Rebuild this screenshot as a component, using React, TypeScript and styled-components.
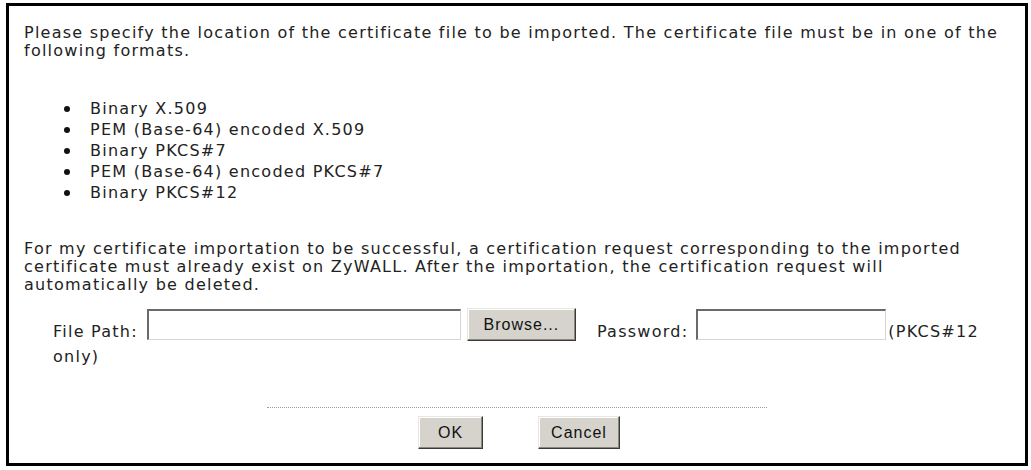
import React from "react";
import styled, { createGlobalStyle } from "styled-components";

const Global = createGlobalStyle`
  html, body { margin: 0; padding: 0; background: #ffffff; }
  body { font-family: "DejaVu Sans", Verdana, sans-serif; }
`;

const Panel = styled.div`
  box-sizing: border-box;
  margin: 3px 0 0 6px;
  width: 1022px;
  height: 463px;
  border: 3px solid #000;
  padding: 18px 15px 14px 15px;
  display: flex;
  flex-direction: column;
  color: #222;
  font-size: 16px;
  line-height: 18px;
  letter-spacing: 1.25px;
`;

const Para = styled.p<{ $top?: number }>`
  margin: ${(p) => p.$top ?? 0}px 0 0 0;
  white-space: nowrap;
`;

const List = styled.ul`
  list-style: none;
  margin: 38px 0 0 0;
  padding: 0 0 0 40px;
`;

const Item = styled.li`
  display: flex;
  align-items: center;
  height: 21px;
  line-height: 21px;
`;

const Dot = styled.span`
  width: 6px;
  height: 6px;
  border-radius: 50%;
  background: #111;
  margin: 0 20px 0 0;
  flex: none;
`;

const FormLine = styled.div`
  display: flex;
  align-items: center;
  margin-top: 14px;
  padding-left: 29px;
  height: 33px;
  white-space: nowrap;
`;

const Label = styled.span<{ $before?: number; $after?: number }>`
  align-self: flex-end;
  margin-left: ${(p) => p.$before ?? 0}px;
  margin-right: ${(p) => p.$after ?? 0}px;
`;

const TextInput = styled.input<{ $w: number }>`
  box-sizing: border-box;
  width: ${(p) => p.$w}px;
  height: 31px;
  margin: 0;
  padding: 0 3px;
  background: #fff;
  border-style: solid;
  border-width: 2px 1px 1px 2px;
  border-color: #6a6a6a #d6d6d6 #d6d6d6 #6a6a6a;
  outline: none;
`;

const ClassicButton = styled.button<{ $w: number; $before?: number }>`
  box-sizing: border-box;
  width: ${(p) => p.$w}px;
  height: 33px;
  margin-left: ${(p) => p.$before ?? 0}px;
  padding: 0;
  background: #d6d3cd;
  border: 1px solid;
  border-color: #e8e6e2 #3a3a3a #3a3a3a #e8e6e2;
  box-shadow: inset -1px -1px 0 #8a8780, inset 1px 1px 0 #ffffff;
  font-family: "Liberation Sans", Arial, sans-serif;
  font-size: 16px;
  letter-spacing: 1px;
  color: #111;
  cursor: default;
`;

const WrapLine = styled.div`
  padding-left: 29px;
  margin-top: 7px;
`;

const Footer = styled.div`
  margin-top: auto;
  display: flex;
  flex-direction: column;
  align-items: center;
`;

const Divider = styled.div`
  width: 500px;
  border-top: 1px dotted #9a9a9a;
  margin-bottom: 8px;
`;

const ButtonRow = styled.div`
  display: flex;
  gap: 55px;
  padding-left: 4px;
`;

const formats = [
  "Binary X.509",
  "PEM (Base-64) encoded X.509",
  "Binary PKCS#7",
  "PEM (Base-64) encoded PKCS#7",
  "Binary PKCS#12",
];

export default function App() {
  return (
    <>
      <Global />
      <Panel>
        <Para>
          Please specify the location of the certificate file to be imported. The certificate file must be in one of the
          <br />
          following formats.
        </Para>
        <List>
          {formats.map((f) => (
            <Item key={f}>
              <Dot />
              {f}
            </Item>
          ))}
        </List>
        <Para $top={37}>
          For my certificate importation to be successful, a certification request corresponding to the imported
          <br />
          certificate must already exist on ZyWALL. After the importation, the certification request will
          <br />
          automatically be deleted.
        </Para>
        <FormLine>
          <Label $after={9}>File Path:</Label>
          <TextInput $w={314} type="text" />
          <ClassicButton $w={109} $before={6}>
            Browse...
          </ClassicButton>
          <Label $before={21} $after={8}>
            Password:
          </Label>
          <TextInput $w={190} type="password" />
          <Label $before={2}>(PKCS#12</Label>
        </FormLine>
        <WrapLine>only)</WrapLine>
        <Footer>
          <Divider />
          <ButtonRow>
            <ClassicButton $w={65}>OK</ClassicButton>
            <ClassicButton $w={82}>Cancel</ClassicButton>
          </ButtonRow>
        </Footer>
      </Panel>
    </>
  );
}
